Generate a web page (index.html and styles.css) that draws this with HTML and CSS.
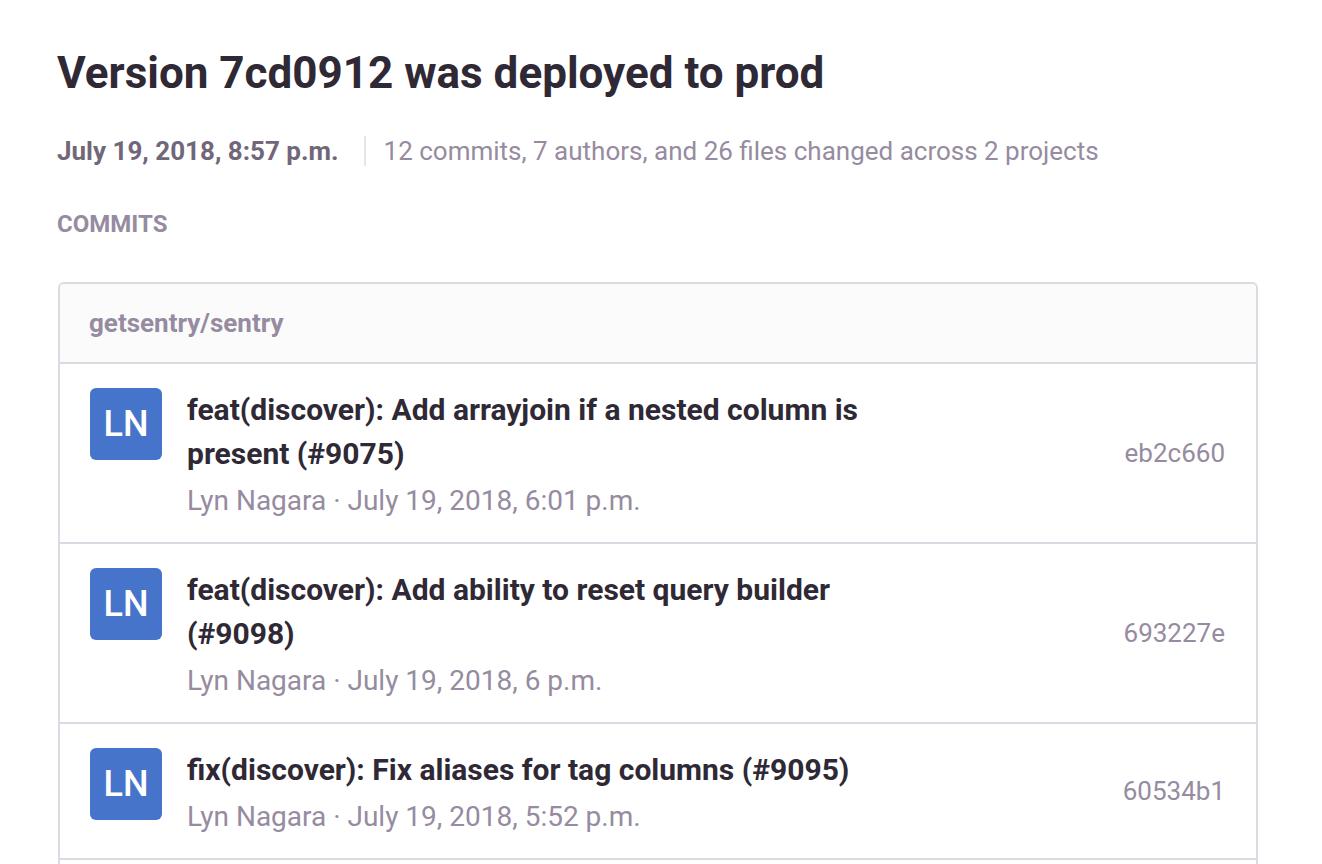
FILE: index.html
```html
<!DOCTYPE html>
<html lang="en">
<head>
<meta charset="utf-8">
<title>Version 7cd0912 was deployed to prod</title>
<link rel="stylesheet" href="styles.css">
</head>
<body>
<main class="page">
  <h1 class="title">Version 7cd0912 was deployed to prod</h1>
  <div class="meta">
    <time class="date">July 19, 2018, 8:57 p.m.</time>
    <span class="summary">12 commits, 7 authors, and 26 files changed across 2 projects</span>
  </div>
  <h2 class="section">COMMITS</h2>
  <section class="panel">
    <h3 class="repo">getsentry/sentry</h3>
    <article class="commit">
      <div class="avatar">LN</div>
      <div class="info">
        <div class="message">feat(discover): Add arrayjoin if a nested column is present (#9075)</div>
        <div class="byline">Lyn Nagara · July 19, 2018, 6:01 p.m.</div>
      </div>
      <div class="sha">eb2c660</div>
    </article>
    <article class="commit">
      <div class="avatar">LN</div>
      <div class="info">
        <div class="message">feat(discover): Add ability to reset query builder (#9098)</div>
        <div class="byline">Lyn Nagara · July 19, 2018, 6 p.m.</div>
      </div>
      <div class="sha">693227e</div>
    </article>
    <article class="commit">
      <div class="avatar">LN</div>
      <div class="info">
        <div class="message">fix(discover): Fix aliases for tag columns (#9095)</div>
        <div class="byline">Lyn Nagara · July 19, 2018, 5:52 p.m.</div>
      </div>
      <div class="sha">60534b1</div>
    </article>
  </section>
</main>
</body>
</html>
```

FILE: styles.css
```css
* { box-sizing: border-box; }
body {
  margin: 0;
  background: #fff;
  color: #2f2936;
  font-family: Roboto, "Liberation Sans", sans-serif;
}
.page { padding: 44px 64px 0 57px; }
.title { margin: 0; font-size: 44px; line-height: 58px; font-weight: 700; }
.meta { display: flex; align-items: center; margin-top: 34px; font-size: 26px; line-height: 30px; }
.date { font-weight: 700; color: #716779; }
.summary { margin-left: 25px; padding-left: 18px; border-left: 2px solid #e7e4ea; color: #968ba0; }
.section { margin: 42px 0 0; font-size: 24px; line-height: 32px; font-weight: 700; color: #968ba0; }
.panel { margin: 42px 0 0 1px; padding-bottom: 4px; border: 2px solid #ddd8e1; border-bottom: 0; border-radius: 6px 6px 0 0; overflow: hidden; }
.repo { margin: 0; padding: 22px 29px; border-bottom: 2px solid #ddd8e1; font-size: 26px; line-height: 34px; font-weight: 700; color: #968ba0; background: #fbfbfb; }
.commit { display: flex; border-bottom: 2px solid #ddd8e1; padding: 24px 31px 24px 30px; }
.avatar { flex: none; width: 72px; height: 72px; border-radius: 6px; background: #4674ca; color: #fff; font-size: 36px; line-height: 72px; font-weight: 500; text-align: center; }
.info { flex: 1; margin-left: 25px; }
.message { max-width: 700px; font-size: 30px; line-height: 44px; font-weight: 700; }
.byline { margin-top: 8px; font-size: 28px; line-height: 34px; color: #968ba0; }
.sha { align-self: center; font-size: 26px; line-height: 34px; color: #968ba0; }
```
